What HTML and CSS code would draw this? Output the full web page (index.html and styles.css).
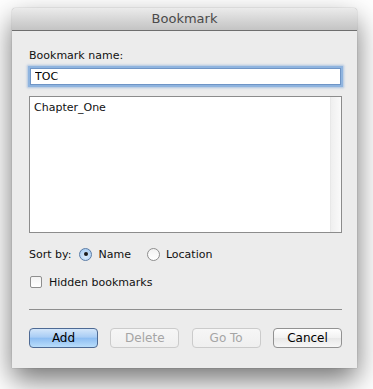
FILE: index.html
```html
<!DOCTYPE html>
<html lang="en">
<head>
    <meta charset="UTF-8">
    <meta name="viewport" content="width=device-width, initial-scale=1.0">
    <title>Bookmark</title>
    <link rel="stylesheet" href="styles.css">
</head>
<body>
<div class="dialog">
    <div class="titlebar">Bookmark</div>
    <div class="content">
        <div class="field-label">Bookmark name:</div>
        <input class="name-input" type="text" value="TOC">
        <div class="list">
            <div class="list-items">
                <div class="list-item">Chapter_One</div>
            </div>
            <div class="scroll-track"></div>
        </div>
        <div class="sort-row">
            <span class="sort-label">Sort by:</span>
            <span class="radio checked"></span>
            <span class="radio-text">Name</span>
            <span class="radio"></span>
            <span class="radio-text">Location</span>
        </div>
        <div class="check-row">
            <span class="checkbox"></span>
            <span class="check-text">Hidden bookmarks</span>
        </div>
        <div class="separator"></div>
        <div class="buttons">
            <button class="btn default">Add</button>
            <button class="btn disabled">Delete</button>
            <button class="btn disabled">Go To</button>
            <button class="btn">Cancel</button>
        </div>
    </div>
</div>
</body>
</html>
```

FILE: styles.css
```css
body { margin: 0; background: #fff; font-family: "DejaVu Sans", sans-serif; font-size: 11px; color: #111; height: 389px; overflow: hidden; }
.dialog {
    width: 345px;
    margin: 8px 0 0 12px;
    background: #ececec;
    border-radius: 4px 4px 0 0;
    box-shadow: 0 12px 28px rgba(0, 0, 0, 0.55), 0 0 1px rgba(0, 0, 0, 0.5);
}
.titlebar {
    height: 22px;
    line-height: 22px;
    text-align: center;
    font-size: 13px;
    color: #4a4a4a;
    background: linear-gradient(#ebebeb, #d3d3d3 60%, #c4c4c4);
    border-bottom: 1px solid #6e6e6e;
    border-radius: 4px 4px 0 0;
}
.content { padding: 18px 15px 20px 17px; }
.field-label { line-height: 14px; }
.name-input {
    display: block;
    box-sizing: border-box;
    width: 311px;
    height: 17px;
    margin: 5px 0 0 1px;
    padding: 0 4px;
    border: 1px solid #6f95c6;
    box-shadow: 0 0 0 2px #8fb4df, 0 0 2px 3px rgba(110, 155, 214, 0.5);
    font-family: "DejaVu Sans", sans-serif;
    font-size: 11px;
    color: #000;
    outline: none;
}
.list {
    display: flex;
    height: 135px;
    margin-top: 11px;
    border: 1px solid #8c8c8c;
    background: #fff;
}
.list-items { flex: 1; padding: 4px 4px; }
.list-item { line-height: 14px; }
.scroll-track {
    width: 10px;
    border-left: 1px solid #e8e8e8;
    background: linear-gradient(to right, #efefef, #fafafa);
}
.sort-row { display: flex; align-items: center; margin-top: 14px; height: 14px; }
.sort-label { margin-right: 8px; }
.radio {
    box-sizing: border-box;
    width: 13px;
    height: 13px;
    border-radius: 50%;
    border: 1px solid #8e8e8e;
    background: linear-gradient(#f2f2f2, #fff);
    margin-right: 6px;
    display: flex;
    align-items: center;
    justify-content: center;
}
.radio.checked {
    border-color: #5a7ba6;
    background: radial-gradient(circle at 50% 70%, #d8ebfd, #9fc7f0);
}
.radio.checked::after { content: ""; width: 4px; height: 4px; border-radius: 50%; background: #1b1b1b; }
.radio-text { margin-right: 16px; }
.check-row { display: flex; align-items: center; margin-top: 14px; height: 14px; padding-left: 1px; }
.checkbox {
    box-sizing: border-box;
    width: 12px;
    height: 12px;
    border: 1px solid #8e8e8e;
    border-radius: 2px;
    background: linear-gradient(#f3f3f3, #fff);
    margin-right: 7px;
}
.separator { height: 1px; background: #8e8e8e; margin-top: 20px; }
.buttons { display: flex; justify-content: space-between; margin-top: 18px; }
.btn {
    box-sizing: border-box;
    width: 69px;
    height: 20px;
    padding: 0;
    border: 1px solid #929292;
    border-radius: 4px;
    background: linear-gradient(#fff, #f1f1f1 50%, #e8e8e8 51%, #f7f7f7);
    font-family: "DejaVu Sans", sans-serif;
    font-size: 12px;
    color: #000;
}
.btn.default {
    border-color: #4e6a94;
    background: linear-gradient(#d3e6fa, #a9cdf5 45%, #8ebef2 52%, #b9ddfb);
}
.btn.disabled { border-color: #cbcbcb; color: #a5a5a5; background: linear-gradient(#f6f6f6, #efefef); }
```
